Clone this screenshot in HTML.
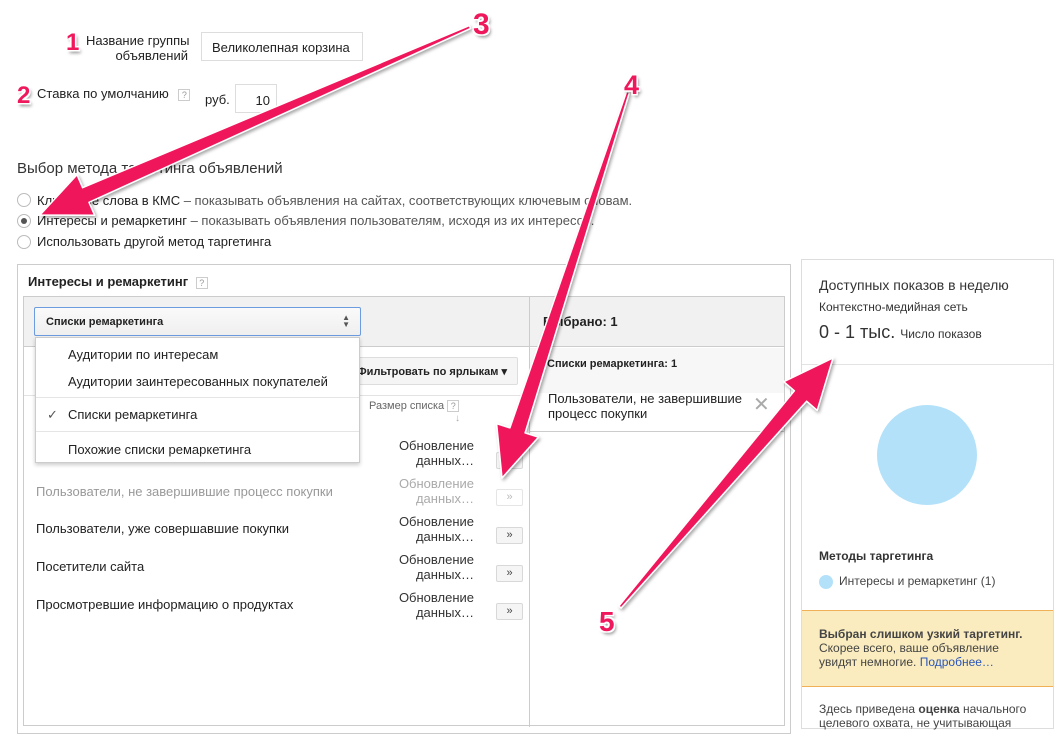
<!DOCTYPE html>
<html><head><meta charset="utf-8"><style>
*{margin:0;padding:0;box-sizing:border-box}
body{width:1055px;height:723px;overflow:hidden;background:#fff;font-family:"Liberation Sans",Arial,sans-serif;font-size:13px;color:#222;position:relative}
.a{position:absolute;white-space:nowrap}
.q{display:inline-block;width:12px;height:12px;border:1px solid #ccc;font-size:9px;color:#999;text-align:center;line-height:10px;vertical-align:middle}
.radio{position:absolute;width:14px;height:14px;border:1px solid #bbb;border-radius:50%;background:#fff}
.btn{position:absolute;width:27px;height:17px;border:1px solid #d8d8d8;background:#f5f5f5;border-radius:2px;font-size:11px;text-align:center;line-height:14px;color:#444}
.upd{position:absolute;left:370px;width:104px;text-align:right;line-height:15px;font-size:13px;color:#333}
.num{font-weight:bold;color:#f0185c;text-shadow:-1.5px -1.5px 0 #fff,1.5px -1.5px 0 #fff,-1.5px 1.5px 0 #fff,1.5px 1.5px 0 #fff,2px 3px 3px rgba(0,0,0,.45)}
</style></head><body>

<div class="a" style="top:33px;text-align:right;line-height:15px;width:102px;left:86px">Название группы<br>объявлений</div>
<div class="a" style="left:201px;top:32px;width:162px;height:29px;border:1px solid #ddd;padding:7px 10px;font-size:13px">Великолепная корзина</div>
<div class="a" style="left:37px;top:86px">Ставка по умолчанию <span class="q" style="margin-left:6px">?</span></div>
<div class="a" style="left:205px;top:92px">руб.</div>
<div class="a" style="left:235px;top:84px;width:42px;height:29px;border:1px solid #ddd;text-align:right;padding:8px 6px">10</div>

<div class="a" style="left:17px;top:160px;font-size:15px;color:#333">Выбор метода таргетинга объявлений</div>
<div class="radio" style="left:17px;top:193px"></div>
<div class="a" style="left:37px;top:193px">Ключевые слова в КМС <span style="color:#555">– показывать объявления на сайтах, соответствующих ключевым словам.</span></div>
<div class="radio" style="left:17px;top:214px"><div style="position:absolute;left:3px;top:3px;width:6px;height:6px;border-radius:50%;background:#555"></div></div>
<div class="a" style="left:37px;top:213px">Интересы и ремаркетинг <span style="color:#555">– показывать объявления пользователям, исходя из их интересов.</span></div>
<div class="radio" style="left:17px;top:235px"></div>
<div class="a" style="left:37px;top:234px">Использовать другой метод таргетинга</div>

<!-- main box -->
<div class="a" style="left:17px;top:264px;width:774px;height:470px;border:1px solid #ccc"></div>
<div class="a" style="left:28px;top:274px;font-weight:bold">Интересы и ремаркетинг <span class="q" style="margin-left:4px;font-weight:normal">?</span></div>
<div class="a" style="left:23px;top:296px;width:762px;height:430px;border:1px solid #ccc"></div>
<div class="a" style="left:24px;top:297px;width:505px;height:50px;background:#f1f1f1;border-bottom:1px solid #ccc"></div>
<div class="a" style="left:529px;top:297px;width:1px;height:430px;background:#ccc"></div>
<div class="a" style="left:530px;top:297px;width:254px;height:50px;background:#f1f1f1;border-bottom:1px solid #ccc"></div>
<div class="a" style="left:543px;top:314px;font-weight:bold;font-size:13px">Выбрано: 1</div>
<div class="a" style="left:530px;top:348px;width:254px;height:45px;background:#f7f7f7"></div>
<div class="a" style="left:547px;top:358px;font-weight:bold;font-size:11px">Списки ремаркетинга: 1</div>
<div class="a" style="left:530px;top:393px;width:254px;height:39px;border-bottom:1px solid #ccc"></div>
<div class="a" style="left:548px;top:391px;line-height:15px">Пользователи, не завершившие<br>процесс покупки</div>
<div class="a" style="left:753px;top:392px;font-size:20px;color:#aaa">✕</div>

<!-- left area -->
<div class="a" style="left:345px;top:357px;width:173px;height:28px;border:1px solid #ddd;background:#f5f5f5;border-radius:2px;font-weight:bold;font-size:11px;padding:7px 10px 0 0;text-align:right">Фильтровать по ярлыкам ▾</div>
<div class="a" style="left:24px;top:395px;width:505px;height:1px;background:#e3e3e3"></div>
<div class="a" style="left:369px;top:400px;font-size:11px;color:#666">Размер списка <span class="q">?</span></div>
<div class="a" style="left:455px;top:413px;font-size:10px;color:#aaa">↓</div>

<div class="upd" style="top:438px">Обновление<br>данных…</div>
<div class="btn" style="left:496px;top:452px">»</div>
<div class="a" style="left:36px;top:484px;color:#999">Пользователи, не завершившие процесс покупки</div>
<div class="upd" style="top:476px;color:#aaa">Обновление<br>данных…</div>
<div class="btn" style="left:496px;top:489px;background:#fff;color:#bbb;border-color:#e5e5e5">»</div>
<div class="a" style="left:36px;top:521px">Пользователи, уже совершавшие покупки</div>
<div class="upd" style="top:514px">Обновление<br>данных…</div>
<div class="btn" style="left:496px;top:527px">»</div>
<div class="a" style="left:36px;top:559px">Посетители сайта</div>
<div class="upd" style="top:552px">Обновление<br>данных…</div>
<div class="btn" style="left:496px;top:565px">»</div>
<div class="a" style="left:36px;top:597px">Просмотревшие информацию о продуктах</div>
<div class="upd" style="top:590px">Обновление<br>данных…</div>
<div class="btn" style="left:496px;top:603px">»</div>

<!-- dropdown -->
<div class="a" style="left:34px;top:307px;width:327px;height:29px;border:1px solid #6d9be0;border-radius:2px;background:linear-gradient(#fafafa,#efefef);font-weight:bold;font-size:11px;padding:8px 11px">Списки ремаркетинга<span style="position:absolute;right:10px;top:6px;font-size:8px;line-height:7px;color:#555">▲<br>▼</span></div>
<div class="a" style="left:35px;top:337px;width:325px;height:126px;background:#fff;border:1px solid #ccc;box-shadow:0 2px 4px rgba(0,0,0,.2)"></div>
<div class="a" style="left:68px;top:347px">Аудитории по интересам</div>
<div class="a" style="left:68px;top:374px">Аудитории заинтересованных покупателей</div>
<div class="a" style="left:36px;top:397px;width:323px;height:1px;background:#e5e5e5"></div>
<div class="a" style="left:47px;top:407px;color:#555">✓</div>
<div class="a" style="left:68px;top:407px">Списки ремаркетинга</div>
<div class="a" style="left:36px;top:431px;width:323px;height:1px;background:#e5e5e5"></div>
<div class="a" style="left:68px;top:442px">Похожие списки ремаркетинга</div>

<!-- right panel -->
<div class="a" style="left:801px;top:259px;width:253px;height:470px;border:1px solid #ddd"></div>
<div class="a" style="left:819px;top:277px;font-size:14px;color:#333">Доступных показов в неделю</div>
<div class="a" style="left:819px;top:300px;font-size:12px;color:#333">Контекстно-медийная сеть</div>
<div class="a" style="left:819px;top:322px;font-size:18px;color:#333">0 - 1 тыс. <span style="font-size:12px">Число показов</span></div>
<div class="a" style="left:802px;top:364px;width:251px;height:1px;background:#e3e3e3"></div>
<div class="a" style="left:877px;top:405px;width:100px;height:100px;border-radius:50%;background:#b3e1f9"></div>
<div class="a" style="left:819px;top:549px;font-weight:bold;font-size:12px;color:#333">Методы таргетинга</div>
<div class="a" style="left:819px;top:575px;width:14px;height:14px;border-radius:50%;background:#b3e1f9"></div>
<div class="a" style="left:839px;top:574px;font-size:12px;color:#444">Интересы и ремаркетинг (1)</div>
<div class="a" style="left:802px;top:610px;width:251px;height:77px;background:#faecbf;border-top:1px solid #f0b058;border-bottom:1px solid #f0b058"></div>
<div class="a" style="left:819px;top:627px;font-size:12px;line-height:14px;color:#444"><b>Выбран слишком узкий таргетинг.</b><br>Скорее всего, ваше объявление<br>увидят немногие. <span style="color:#2a55b8">Подробнее…</span></div>
<div class="a" style="left:819px;top:702px;font-size:12px;line-height:14px;color:#444">Здесь приведена <b>оценка</b> начального<br>целевого охвата, не учитывающая</div>

<!-- arrows -->
<svg class="a" style="left:0;top:0" width="1055" height="723">
<defs><filter id="s" x="-10%" y="-10%" width="120%" height="120%"><feDropShadow dx="1.5" dy="2" stdDeviation="1.5" flood-color="#000" flood-opacity=".35"/></filter></defs>
<g fill="#f0185c" stroke="#fff" stroke-width="1.5" stroke-linejoin="round" filter="url(#s)">
<polygon points="470.6,28.4 89,202.3 94.6,215.2 40,215 77,174.8 82.6,187.7 469.4,25.6"/>
<polygon points="629.4,92.5 525.1,432.9 538.4,437.2 502,478 496.6,423.6 509.9,427.9 626.6,91.5"/>
<polygon points="621.1,608 806.6,401.2 817.2,410.3 833,358 783.8,381.7 794.4,390.8 618.9,606"/>
</g></svg>
<div class="a num" style="left:66px;top:29px;font-size:24px">1</div>
<div class="a num" style="left:17px;top:82px;font-size:24px">2</div>
<div class="a num" style="left:473px;top:8px;font-size:30px">3</div>
<div class="a num" style="left:624px;top:70px;font-size:27px">4</div>
<div class="a num" style="left:599px;top:606px;font-size:28px">5</div>
</body></html>
